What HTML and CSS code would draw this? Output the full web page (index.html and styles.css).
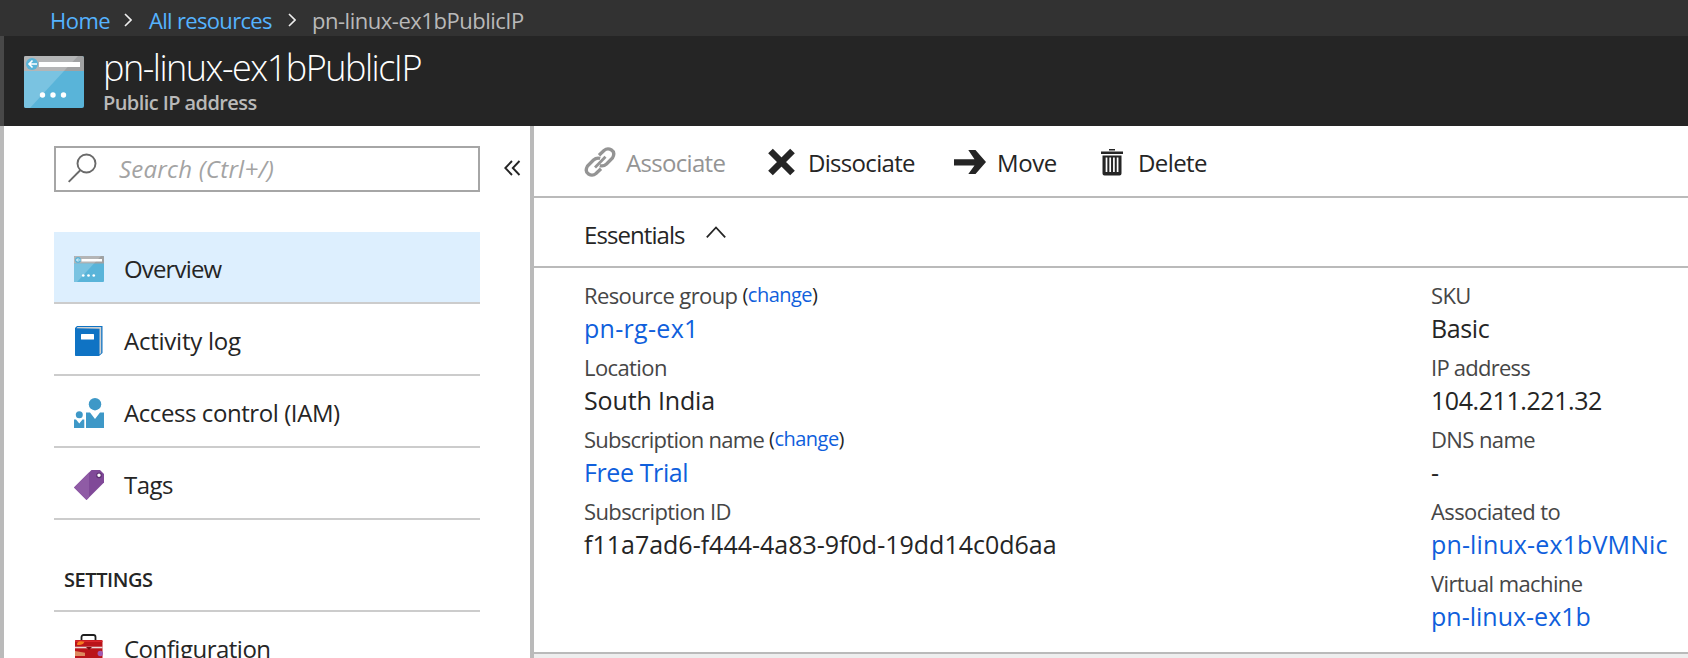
FILE: index.html
```html
<!DOCTYPE html>
<html lang="en">
<head>
<meta charset="utf-8">
<title>pn-linux-ex1bPublicIP</title>
<link rel="stylesheet" href="styles.css">
</head>
<body>
<svg width="0" height="0" class="defs">
  <symbol id="ip" viewBox="0 0 60 52">
    <rect width="60" height="52" rx="2" fill="#59b4d9"/>
    <path d="M2 0H58a2 2 0 0 1 2 2V15H0V2a2 2 0 0 1 2-2z" fill="#a0a1a2"/>
    <path d="M2 0H54L40 15H0V2a2 2 0 0 1 2-2z" fill="#b4b5b6"/>
    <path d="M0 15H40L6 52H2a2 2 0 0 1-2-2z" fill="#7ac3e1"/>
    <rect x="15" y="6" width="41" height="5" fill="#fff"/>
    <circle cx="8" cy="8" r="6" fill="#59b4d9"/>
    <path d="M13 8H5M8.500 4.500L5 8l3.500 3.500" fill="none" stroke="#fff" stroke-width="1.600"/>
    <g fill="#fff"><circle cx="18.500" cy="39" r="2.700"/><circle cx="29" cy="39" r="2.700"/><circle cx="39.500" cy="39" r="2.700"/></g>
  </symbol>
</svg>

<nav class="crumbs">
  <a class="home">Home</a>
  <svg width="8" height="14" viewBox="0 0 8 14"><path d="M1 1l6 6-6 6" fill="none" stroke="#eee" stroke-width="1.600"/></svg>
  <a class="all">All resources</a>
  <svg width="8" height="14" viewBox="0 0 8 14"><path d="M1 1l6 6-6 6" fill="none" stroke="#eee" stroke-width="1.600"/></svg>
  <span class="current">pn-linux-ex1bPublicIP</span>
</nav>

<header class="head">
  <svg class="head-icon" width="60" height="52"><use href="#ip"/></svg>
  <div class="titles">
    <h1>pn-linux-ex1bPublicIP</h1>
    <p>Public IP address</p>
  </div>
</header>

<div class="body">
  <aside class="side">
    <div class="search-row">
      <div class="search">
        <svg width="30" height="30" viewBox="0 0 30 30"><g fill="none" stroke="#6a6a6a" stroke-width="1.900"><circle cx="18.500" cy="10.500" r="9"/><path d="M12.500 17L.7 28.800"/></g></svg>
        <span>Search (Ctrl+/)</span>
      </div>
      <svg class="collapse" width="17" height="16" viewBox="0 0 17 16"><path d="M8 1L1.300 8 8 15M15.500 1L8.800 8l6.700 7" fill="none" stroke="#252525" stroke-width="1.900"/></svg>
    </div>
    <ul class="menu">
      <li class="active"><svg width="30" height="26"><use href="#ip"/></svg><span class="t-overview">Overview</span></li>
      <li><svg width="30" height="30" viewBox="0 0 30 30">
        <path d="M1 2L3 0H28.500V27L25 30H2.500A1.500 1.500 0 0 1 1 28.500z" fill="#0f73c4"/>
        <path d="M2.500 2.300L3.500 1H27.200V27L25.500 28.500V2.700z" fill="#d0d0d0"/>
        <path d="M1 3H25V30H2.500A1.500 1.500 0 0 1 1 28.500z" fill="#0f73c4"/>
        <rect x="7" y="8" width="13" height="5.500" rx=".5" fill="#fff"/></svg><span class="t-log">Activity log</span></li>
      <li><svg width="30" height="30" viewBox="0 0 30 30"><g fill="#3e98c7"><circle cx="21" cy="6.200" r="6.200"/><path d="M12 14.500H16L21 21l5-6.500h4V30H12z"/><circle cx="5.300" cy="16.800" r="3.500"/><path d="M0 21.500H2L5.300 25.500 8.500 21.500H10.300V30H0z"/></g></svg><span class="t-access">Access control (IAM)</span></li>
      <li><svg width="30" height="30" viewBox="0 0 30 30"><path d="M0 17.500L17.500 0H26l4 4V12.500L12.500 30z" fill="#804998"/><path d="M0 17.500L15 2.500V27.500L12.500 30z" fill="#8f5ba5"/><circle cx="25" cy="5.300" r="2.300" fill="#fff" stroke="#5b2f70" stroke-width="1.200"/></svg><span class="t-tags">Tags</span></li>
    </ul>
    <h2>SETTINGS</h2>
    <ul class="menu">
      <li><svg width="30" height="30" viewBox="0 0 30 30">
        <path d="M7.500 7V3a2 2 0 0 1 2-2H19.500a2 2 0 0 1 2 2V7" fill="none" stroke="#1e1e1e" stroke-width="1.800"/>
        <rect x="1" y="6" width="27.500" height="24" rx="1" fill="#ba141a"/>
        <path d="M1 6.500H28.500V8H1z" fill="#d9262c"/>
        <path d="M3 9.500C4 7 7 7 10.500 7.800 9 11 6 11.500 3 10.800z" fill="#f47b20"/>
        <path d="M1 12.700H28.500V14.300H1z" fill="#e9d9d9"/>
        <path d="M12 13H18L15 16z" fill="#7d1014"/>
        <path d="M1 17L11 18.800V22H1z" fill="#dd8a5f"/><circle cx="26.300" cy="19.500" r="2.700" fill="#a35bb0"/></svg><span class="t-config">Configuration</span></li>
    </ul>
  </aside>

  <main class="main">
    <div class="toolbar">
      <div class="tool disabled">
        <svg width="32" height="30" viewBox="0 0 32 30"><g fill="none" stroke="#949494" stroke-width="3.300"><path d="M15 8.300L20 3.500Q23.500 0.500 27.500 3T28.500 11L22.500 17Q19.500 19.800 15.800 18.600"/><path d="M17 21.700L12 26.500Q8.500 29.500 4.500 27T3.500 19L9.500 13Q12.500 10.200 16.200 11.400"/><path d="M11 20.500L21.500 9.800" stroke-width="2.800"/></g></svg>
        <span class="t-assoc">Associate</span>
      </div>
      <div class="tool">
        <svg width="28" height="28" viewBox="0 0 28 28"><path d="M2.500 3L24.500 25M24.500 3L2.500 25" stroke="#252525" stroke-width="6.600"/></svg>
        <span class="t-dissoc">Dissociate</span>
      </div>
      <div class="tool">
        <svg width="32" height="24" viewBox="0 0 32 24"><path d="M0 9.200H20.500L14.300 0H21.500L32 12 21.500 24H14.300L20.500 15.500H0z" fill="#252525"/></svg>
        <span class="t-move">Move</span>
      </div>
      <div class="tool">
        <svg width="22" height="27" viewBox="0 0 22 27"><path d="M8 0H14V1.500H8zM0 2.500H22V5H0zM1.500 6.500H20.500V24.500a2 2 0 0 1-2 2H3.500a2 2 0 0 1-2-2z" fill="#252525"/><path d="M5.500 8.500V23M9.200 8.500V23M12.900 8.500V23M16.600 8.500V23" stroke="#fff" stroke-width="1.700"/></svg>
        <span class="t-delete">Delete</span>
      </div>
    </div>

    <div class="ess-head">
      <span>Essentials</span>
      <svg width="20" height="12" viewBox="0 0 20 12"><path d="M.8 11.300L10 1.500l9.200 9.800" fill="none" stroke="#252525" stroke-width="1.800"/></svg>
    </div>

    <div class="essentials">
      <dl>
        <dt class="k-group">Resource group<span class="change">(<a>change</a>)</span></dt><dd class="v-group"><a>pn-rg-ex1</a></dd>
        <dt>Location</dt><dd class="v-loc">South India</dd>
        <dt class="k-sub">Subscription name<span class="change">(<a>change</a>)</span></dt><dd class="v-trial"><a>Free Trial</a></dd>
        <dt>Subscription ID</dt><dd>f11a7ad6-f444-4a83-9f0d-19dd14c0d6aa</dd>
      </dl>
      <dl>
        <dt>SKU</dt><dd class="v-sku">Basic</dd>
        <dt class="k-ip">IP address</dt><dd class="v-ip">104.211.221.32</dd>
        <dt>DNS name</dt><dd>-</dd>
        <dt>Associated to</dt><dd class="v-nic"><a>pn-linux-ex1bVMNic</a></dd>
        <dt>Virtual machine</dt><dd><a>pn-linux-ex1b</a></dd>
      </dl>
    </div>
  </main>
</div>
</body>
</html>
```
FILE: styles.css
```css
* { box-sizing: border-box; margin: 0; padding: 0; }
html, body { width: 1688px; height: 658px; overflow: hidden; }
body {
  display: flex;
  flex-direction: column;
  font-family: "Open Sans", "Noto Sans", sans-serif;
  color: #252525;
  background: #fff;
  white-space: nowrap;
}
.defs { display: none; }
svg { flex: none; display: block; }

/* breadcrumb */
.crumbs {
  height: 36px;
  flex: none;
  display: flex;
  align-items: center;
  padding: 3px 0 0 50px;
  background: #323232;
  font-size: 22px;
  line-height: 32px;
}
.crumbs a { color: #55b3ff; }
.crumbs .home { width: 74px; letter-spacing: -.5px; }
.crumbs .all { width: 131px; margin-left: 17px; letter-spacing: -.68px; }
.crumbs .all + svg { margin-left: 8px; }
.crumbs .current { margin-left: 16px; color: #b9b9b9; letter-spacing: -.48px; }

/* blade header */
.head {
  height: 90px;
  flex: none;
  display: flex;
  border-left: 4px solid #484848;
  background: #252525;
}
.head-icon { margin: 20px 0 0 20px; }
.titles { margin: 10px 0 0 19px; }
h1 { font-size: 36px; line-height: 44px; font-weight: 330; letter-spacing: -1.5px; color: #fff; }
.titles p { font-size: 20px; line-height: 26px; font-weight: 600; letter-spacing: -.58px; color: #b9b9b9; }

.body { flex: 1; min-height: 0; display: flex; }

/* left menu */
.side {
  width: 534px;
  flex: none;
  overflow: hidden;
  border: solid #bababa;
  border-width: 0 4px;
  padding: 20px 0 0 50px;
}
.search-row { display: flex; align-items: center; }
.search {
  width: 426px;
  height: 46px;
  display: flex;
  align-items: center;
  border: 2px solid #a6a6a6;
  padding-left: 12px;
}
.search span {
  margin-left: 21px;
  font-size: 24px;
  line-height: 32px;
  font-style: italic;
  letter-spacing: .25px;
  color: #a3a3a3;
}
.search svg { margin-top: -3px; }
.collapse { margin: -2px 0 0 24px; }
.menu { list-style: none; width: 426px; }
.search-row + .menu { margin-top: 40px; }
.menu li {
  height: 72px;
  display: flex;
  align-items: center;
  padding: 4px 0 0 20px;
  border-bottom: 2px solid #ccc;
  font-size: 24px;
  line-height: 32px;
}
.menu .active { background: #ddeffe; }
.menu span { margin-left: 20px; }
.menu .t-overview { letter-spacing: -.85px; }
.t-log { letter-spacing: -.24px; }
.t-access { letter-spacing: -.42px; }
.t-tags { letter-spacing: -.53px; }
.menu .t-config { letter-spacing: -.5px; }
h2 {
  width: 426px;
  height: 92px;
  padding: 46px 0 0 10px;
  border-bottom: 2px solid #ccc;
  font-size: 20px;
  line-height: 28px;
  font-weight: 600;
  letter-spacing: -.43px;
}

/* content */
.main { flex: 1; min-width: 0; display: flex; flex-direction: column; background: #eee; }
.toolbar {
  height: 72px;
  flex: none;
  display: grid;
  grid-template-columns: 184px 186px 147px auto;
  padding: 0 0 0 50px;
  border-bottom: 2px solid #bababa;
  background: #fff;
  font-size: 24px;
  line-height: 32px;
}
.tool { display: flex; align-items: center; }
.tool svg { margin-top: 2px; }
.tool span { margin: 3px 0 0; }
.disabled { color: #949494; }
.tool .t-assoc { margin-left: 10px; letter-spacing: -.68px; }
.tool .t-dissoc { margin-left: 12px; letter-spacing: -.69px; }
.tool .t-move { margin-left: 11px; letter-spacing: -.4px; }
.tool .t-delete { margin-left: 15px; letter-spacing: -.6px; }
.ess-head {
  height: 70px;
  flex: none;
  display: flex;
  align-items: center;
  padding: 5px 0 0 50px;
  border-bottom: 2px solid #bababa;
  background: #fff;
  font-size: 24px;
  line-height: 32px;
  letter-spacing: -.93px;
}
.ess-head span { width: 122px; }
.ess-head svg { margin-top: -5px; }
.essentials {
  height: 386px;
  flex: none;
  display: grid;
  grid-template-columns: 847px auto;
  padding: 12px 0 0 50px;
  border-bottom: 2px solid #bababa;
  background: #fff;
}
dt { display: flex; font-size: 22px; line-height: 30px; letter-spacing: -.6px; color: #464646; }
dd { margin-bottom: 6px; font-size: 25px; line-height: 36px; }
dd a, .change a { color: #105fdc; }
.change { margin: 0 0 0 5px; font-size: 20px; letter-spacing: -.53px; color: #252525; }
.k-ip { letter-spacing: -.75px; }
.k-sub { letter-spacing: -.72px; }
.v-group { letter-spacing: .3px; }
.v-loc { letter-spacing: -.15px; }
.v-trial { letter-spacing: -.4px; }
.v-sku { letter-spacing: -.4px; }
.v-ip { letter-spacing: -.43px; }
.v-nic { letter-spacing: .13px; }
```
